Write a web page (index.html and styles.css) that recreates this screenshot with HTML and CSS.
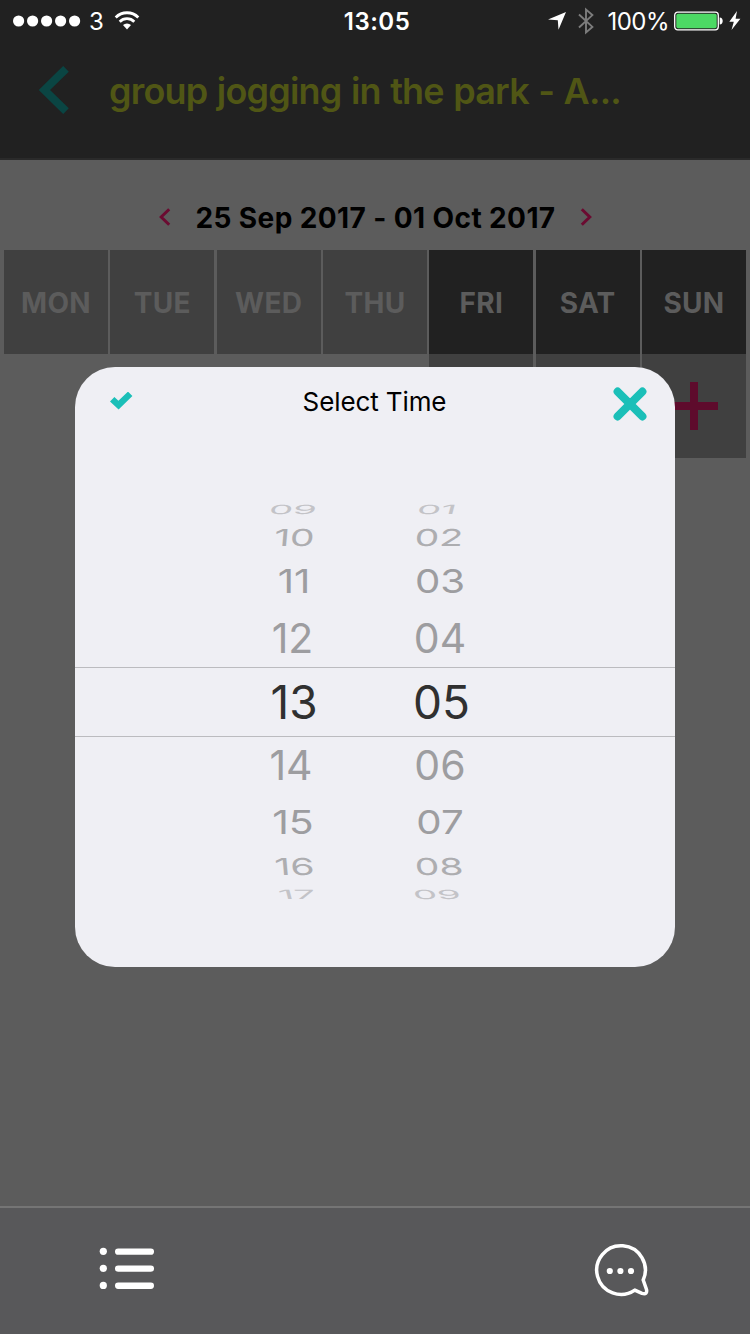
FILE: index.html
```html
<!DOCTYPE html>
<html lang="en">
  <head>
    <meta charset="UTF-8" />
    <meta name="viewport" content="width=device-width, initial-scale=1.0" />
    <title>Select Time</title>
    <link rel="stylesheet" href="styles.css">
  </head>
  <body>
    <div class="screen">
      <div class="status-bar">
        <div class="status-left">
          <svg width="68" height="12" viewBox="0 0 68 12" fill="#fff">
            <circle cx="5.6" cy="6" r="5.6" />
            <circle cx="19.6" cy="6" r="5.6" />
            <circle cx="33.6" cy="6" r="5.6" />
            <circle cx="47.6" cy="6" r="5.6" />
            <circle cx="61.6" cy="6" r="5.6" />
          </svg>
          <span class="carrier">3</span>
          <svg width="26" height="20" viewBox="0 0 26 20" fill="none" stroke="#fff" stroke-width="2.8">
            <path d="M1.7 6.4a16 16 0 0 1 22.6 0" />
            <path d="M5.7 10.7a10.3 10.3 0 0 1 14.6 0" />
            <path d="M13 18.5l-4-4.4a5.8 5.8 0 0 1 8 0z" fill="#fff" stroke="none" />
          </svg>
        </div>
        <span class="clock">13:05</span>
        <div class="status-right">
          <svg width="18" height="18" viewBox="0 0 18 18" fill="#fff">
            <path d="M18 0L10.5 17.8 9.8 8.2 0 7.6z" />
          </svg>
          <svg class="bluetooth" width="16" height="28" viewBox="0 0 16 28" fill="none" stroke="#7d7d7d" stroke-width="1.9">
            <path d="M1 7.5l13.4 12.4-6.4 5.6V2.5l6.4 5.6L1 20.5" />
          </svg>
          <span class="battery-text">100%</span>
          <svg class="battery" width="50" height="20" viewBox="0 0 50 20">
            <rect x="0.7" y="1.2" width="43.6" height="17.6" rx="3" fill="none" stroke="#fff" stroke-width="1.3" />
            <rect x="2.3" y="2.8" width="40.4" height="14.4" rx="1.8" fill="#4cd964" />
            <path d="M45.7 6.5c4 0 4 7 0 7z" fill="#fff" />
          </svg>
          <svg width="12" height="19" viewBox="0 0 12 19" fill="#fff">
            <path d="M8 0L.3 10.7h4.5L2.5 19l8.9-11.3H6.6z" />
          </svg>
        </div>
      </div>

      <div class="header">
        <svg class="back" width="30" height="48" viewBox="0 0 30 48" fill="none" stroke="#0a4543" stroke-width="8">
          <path d="M27 2.8L5.4 24 27 45.2" />
        </svg>
        <span class="title">group jogging in the park - A...</span>
      </div>

      <div class="content">
        <div class="week-nav">
          <svg width="12" height="18" viewBox="0 0 12 18" fill="none" stroke="#6b0b31" stroke-width="3">
            <path d="M10.2 1.2L2.2 9l8 7.8" />
          </svg>
          <span class="week">25 Sep 2017 - 01 Oct 2017</span>
          <svg width="12" height="18" viewBox="0 0 12 18" fill="none" stroke="#6b0b31" stroke-width="3">
            <path d="M1.8 1.2l8 7.8-8 7.8" />
          </svg>
        </div>
        <div class="days">
          <div class="day past">MON</div>
          <div class="day past">TUE</div>
          <div class="day past">WED</div>
          <div class="day past">THU</div>
          <div class="day">FRI</div>
          <div class="day">SAT</div>
          <div class="day">SUN</div>
          <div class="slot slot-first"><span class="plus"></span></div>
          <div class="slot"><span class="plus"></span></div>
          <div class="slot"><span class="plus"></span></div>
        </div>
      </div>

      <div class="tab-bar">
        <svg class="list" width="56" height="42" viewBox="0 0 56 42" fill="#fff">
          <circle cx="4.3" cy="4.3" r="3.6" />
          <circle cx="4.3" cy="21.3" r="3.6" />
          <circle cx="4.3" cy="38.4" r="3.6" />
          <rect x="16" y="1.5" width="39" height="6.3" rx="3.1" />
          <rect x="16" y="18.5" width="39" height="6.3" rx="3.1" />
          <rect x="16" y="35.6" width="39" height="6.3" rx="3.1" />
        </svg>
        <svg width="56" height="54" viewBox="0 0 56 54">
          <path d="M49.2 36A24.3 24.3 0 1 0 40.8 46.1L48 49.3Q53.6 51 52.5 45.5Z" fill="none" stroke="#fff" stroke-width="3.5" stroke-linejoin="round" />
          <circle cx="15.8" cy="27" r="3.1" fill="#fff" />
          <circle cx="26.4" cy="27" r="3.1" fill="#fff" />
          <circle cx="37" cy="27" r="3.1" fill="#fff" />
        </svg>
      </div>

      <div class="modal">
        <div class="modal-header">
          <svg class="check" width="24" height="20" viewBox="0 0 24 20" fill="#1bbfb8">
            <path d="M0 9.4L4.4 5l4 3.8L18 -.4l4.4 4.4L8.6 17.4z" />
          </svg>
          <span class="modal-title">Select Time</span>
          <svg class="close" width="34" height="34" viewBox="0 0 34 34" stroke="#1bbfb8" stroke-width="8" stroke-linecap="round">
            <path d="M4.6 4.6l24.8 24.8M29.4 4.6L4.6 29.4" />
          </svg>
        </div>
        <div class="picker">
          <div class="row far up"><span>09</span><span>01</span></div>
          <div class="row mid up"><span>10</span><span>02</span></div>
          <div class="row near up"><span>11</span><span>03</span></div>
          <div class="row next up"><span>12</span><span>04</span></div>
          <div class="row selected"><span>13</span><span>05</span></div>
          <div class="row next down"><span>14</span><span>06</span></div>
          <div class="row near down"><span>15</span><span>07</span></div>
          <div class="row mid down"><span>16</span><span>08</span></div>
          <div class="row far down"><span>17</span><span>09</span></div>
        </div>
      </div>
    </div>
  </body>
</html>
```
FILE: styles.css
```css
* {
  box-sizing: border-box;
}

body {
  margin: 0;
  font-family: Inter, "Liberation Sans", sans-serif;
}

svg {
  display: block;
  flex: none;
}

.screen {
  position: relative;
  display: flex;
  flex-direction: column;
  width: 750px;
  height: 1334px;
  overflow: hidden;
  background-color: #5c5c5c;
}

.status-bar {
  display: grid;
  grid-template-columns: 1fr auto 1fr;
  align-items: center;
  height: 40px;
  padding: 1px 9px 0 13px;
  background-color: #212121;
  color: #fff;
  font-size: 24px;
}

.status-left,
.status-right {
  display: flex;
  align-items: center;
}

.status-right {
  justify-content: flex-end;
}

.carrier {
  margin: 1px 10px 0 8px;
}

.clock {
  margin-top: 1px;
  font-weight: 600;
  letter-spacing: 0.5px;
}

.bluetooth {
  margin: 0 13px 0 12px;
}

.battery-text {
  margin-top: 1px;
  letter-spacing: -0.5px;
}

.battery {
  margin: 0 5px 0 5px;
}

.header {
  display: flex;
  align-items: center;
  height: 120px;
  padding: 0 0 18px 39px;
  background-color: #212121;
  border-bottom: 2px solid #2a2a2a;
}

.title {
  margin: 1px 0 0 40px;
  color: #505615;
  font-size: 36px;
  font-weight: 600;
  letter-spacing: -0.8px;
  word-spacing: 1.1px;
  white-space: nowrap;
}

.content {
  flex: 1;
}

.week-nav {
  display: flex;
  justify-content: center;
  align-items: center;
  gap: 24px;
  height: 90px;
  padding: 25px 0 0 1px;
}

.week-nav svg {
  margin-bottom: 2px;
}

.week {
  padding-top: 1px;
  color: #000;
  font-size: 28px;
  font-weight: 700;
  letter-spacing: 0.4px;
  white-space: nowrap;
}

.days {
  display: grid;
  grid-template-columns: repeat(7, 104px);
  grid-auto-rows: 104px;
  column-gap: 2.333px;
  padding-left: 4px;
}

.day,
.slot {
  display: flex;
  justify-content: center;
  align-items: center;
}

.day {
  padding-top: 1px;
  background-color: #212121;
  color: #5c5c5c;
  font-size: 28px;
  font-weight: 700;
  letter-spacing: 0.3px;
}

.day.past,
.slot {
  background-color: #404040;
}

.slot-first {
  grid-column: 5;
}

.plus {
  width: 48px;
  height: 48px;
  background: linear-gradient(#5e0b2c, #5e0b2c) center / 8px 48px no-repeat,
    linear-gradient(#5e0b2c, #5e0b2c) center / 48px 8px no-repeat;
}

.tab-bar {
  display: flex;
  justify-content: space-between;
  align-items: center;
  height: 128px;
  padding: 0 100px 0 99px;
  background-color: #58585a;
  border-top: 2px solid #757575;
}

.list {
  margin-bottom: 6px;
}

.modal {
  position: absolute;
  top: 367px;
  left: 75px;
  width: 600px;
  height: 600px;
  border-radius: 40px;
  background-color: #efeff4;
}

.modal-header {
  display: grid;
  grid-template-columns: 1fr auto 1fr;
  align-items: center;
  height: 130px;
  padding: 0 28px 57px 35px;
}

.check {
  margin-bottom: 4px;
}

.modal-title {
  margin: 0 4px 4px -4px;
  font-size: 26px;
  letter-spacing: -0.1px;
}

.close {
  justify-self: end;
}

.row {
  display: grid;
  grid-template-columns: 146px 146px;
  justify-content: center;
  align-content: center;
  height: 57px;
  padding-right: 16px;
  color: #9d9da0;
  font-size: 41px;
  line-height: 1;
  text-align: center;
}

.row.selected {
  height: 70px;
  padding-right: 13px;
  border-top: 1px solid #bbbbbf;
  border-bottom: 1px solid #bbbbbf;
  color: #303030;
  font-size: 46px;
}

.row.selected span:first-child {
  transform: translateX(-1.5px);
}

.row.next.up span:first-child {
  transform: translateX(-1.5px);
}

.row.next.down span:first-child {
  transform: translateX(-3px);
}

.row.near span {
  transform: scale(0.98, 0.81);
}

.row.near.down span:first-child {
  transform: translateX(-1px) scale(1, 0.81);
}

.row.mid {
  height: 31px;
  padding-right: 19px;
  color: #adadb0;
}

.row.mid.up span {
  transform: scale(0.95, 0.57) skewX(-3deg);
}

.row.mid.down span {
  transform: scale(0.95, 0.57) skewX(3deg);
}

.row.mid span:first-child {
  padding-left: 3px;
}

.row.far {
  height: 25px;
  padding-right: 22px;
  color: #c3c3c7;
}

.row.far.up span {
  transform: scale(0.93, 0.31) skewX(-5deg);
}

.row.far.up span:first-child {
  transform: translateX(2px) scale(0.93, 0.31) skewX(-5deg);
}

.row.far.down span {
  transform: scale(0.93, 0.31) skewX(5deg);
}

.row.far.down span:first-child {
  transform: translateX(6px) scale(0.93, 0.31) skewX(5deg);
}
```
